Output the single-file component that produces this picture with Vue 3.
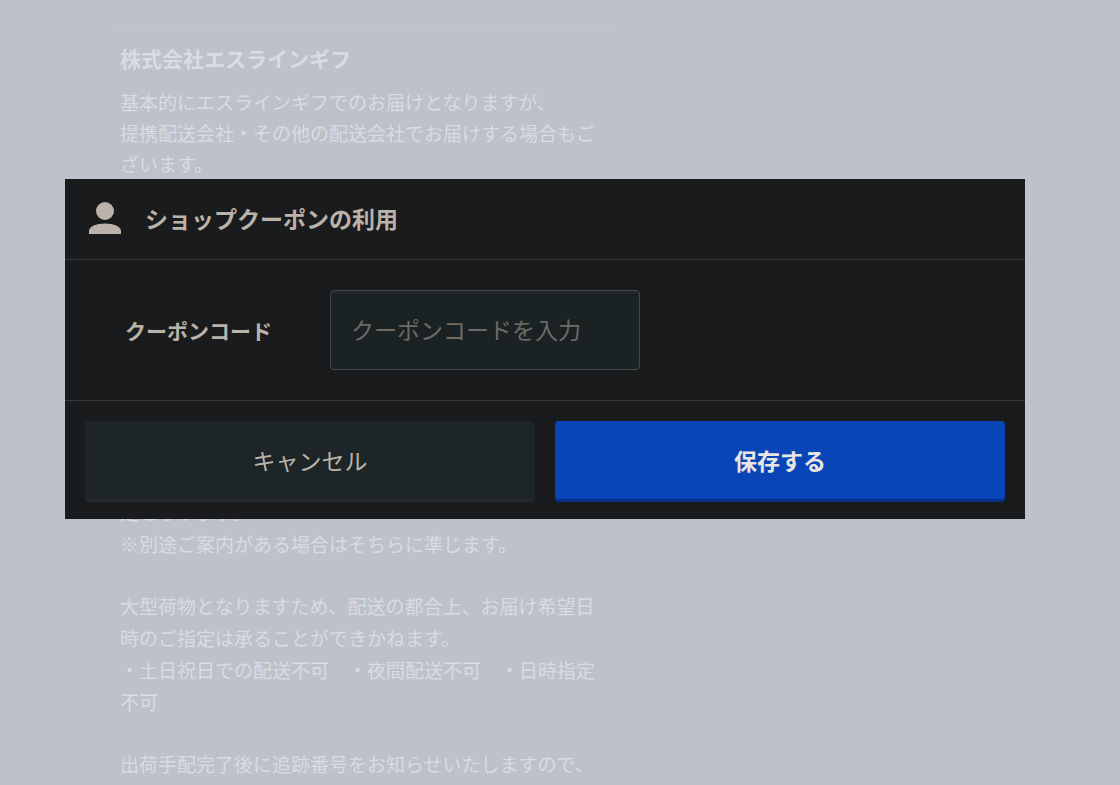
<script setup>
import { ref } from 'vue'

const couponCode = ref('')
const open = ref(true)
</script>

<template>
  <div class="page">
    <main class="guide">
      <section class="carrier">
        <h2>株式会社エスラインギフ</h2>
        <p>基本的にエスラインギフでのお届けとなりますが、<br>提携配送会社・その他の配送会社でお届けする場合もございます。</p>
      </section>
      <section class="notes">
        <p>定となります。<br>※別途ご案内がある場合はそちらに準じます。</p>
        <p>大型荷物となりますため、配送の都合上、お届け希望日時のご指定は承ることができかねます。<br>・土日祝日での配送不可　・夜間配送不可　・日時指定不可</p>
        <p>出荷手配完了後に追跡番号をお知らせいたしますので、</p>
      </section>
    </main>

    <div v-if="open" class="overlay">
      <form class="dialog" role="dialog" aria-labelledby="dialog-title" @submit.prevent="open = false">
        <header class="dialog-head">
          <svg class="person" viewBox="0 0 32 32" aria-hidden="true">
            <circle cx="16" cy="9" r="9" />
            <path d="M0 32v-3c0-4.500 7-7.500 16-7.500s16 3 16 7.500v3z" />
          </svg>
          <h1 id="dialog-title">ショップクーポンの利用</h1>
        </header>
        <div class="dialog-body">
          <label for="coupon">クーポンコード</label>
          <input id="coupon" v-model="couponCode" type="text" placeholder="クーポンコードを入力">
        </div>
        <footer class="dialog-foot">
          <button type="button" class="cancel" @click="open = false">キャンセル</button>
          <button type="submit" class="save">保存する</button>
        </footer>
      </form>
    </div>
  </div>
</template>

<style>
body {
  background: #bdc1ca;
}
</style>

<style scoped>
.page,
.page button,
.page input {
  font-family: "Noto Sans CJK JP", sans-serif;
}

.page {
  height: 100vh;
  overflow: hidden;
  color: #d8dce4;
}

.page *,
.page {
  box-sizing: border-box;
}

h1,
h2,
p {
  margin: 0;
}

.guide {
  width: 502px;
  max-width: 100%;
  margin: 25px 0 0 110px;
  border-top: 1px solid #c2c6d2;
  padding: 16px 7px 0 10px;
  font-size: 19px;
  line-height: 32px;
}

.page::before {
  content: "";
  display: table;
}

.carrier h2 {
  margin-bottom: 12px;
  font-size: 21px;
  font-weight: 700;
  line-height: 32px;
}

.carrier p {
  line-height: 31px;
}

.notes {
  display: grid;
  gap: 30px;
  margin-top: 317px;
}

.overlay {
  position: fixed;
  inset: 0;
  padding: 179px 95px 0 65px;
}

.dialog {
  background: #1a1b1c;
  color: #bab3aa;
}

.dialog-head {
  display: flex;
  align-items: center;
  gap: 24px;
  height: 81px;
  padding: 0 24px 2px;
  border-bottom: 1px solid #37393b;
}

.person {
  width: 32px;
  height: 32px;
  fill: #bab3aa;
}

.dialog-head h1 {
  font-size: 23px;
  font-weight: 700;
  line-height: 32px;
}

.dialog-body {
  display: grid;
  grid-template-columns: 205px 310px;
  align-items: center;
  padding: 30px 60px;
}

.dialog-body label {
  font-size: 21px;
  font-weight: 700;
}

.dialog-body input {
  width: 100%;
  height: 80px;
  padding: 0 20px 2px;
  border: 1px solid #43484b;
  border-radius: 4px;
  background: #1b2223;
  box-shadow: inset 0 3px 0 #20282d;
  color: #bab3aa;
  font-size: 23px;
  outline: none;
}

.dialog-body input::placeholder {
  color: #6d6c67;
  opacity: 1;
}

.dialog-foot {
  display: grid;
  grid-template-columns: 1fr 1fr;
  gap: 20px;
  padding: 20px 20px 17px;
  border-top: 1px solid #37393b;
}

.dialog-foot button {
  height: 81px;
  padding: 0 0 4px;
  border: 0;
  border-radius: 4px;
  font-size: 23px;
  cursor: pointer;
}

.cancel {
  background: #1e2528;
  box-shadow: inset 0 -3px 0 #22292d;
  color: #bab3aa;
}

.save {
  background: #0945b7;
  box-shadow: inset 0 -3px 0 #08328a;
  color: #e8e6e3;
}

.dialog-foot .save {
  font-weight: 700;
}
</style>
